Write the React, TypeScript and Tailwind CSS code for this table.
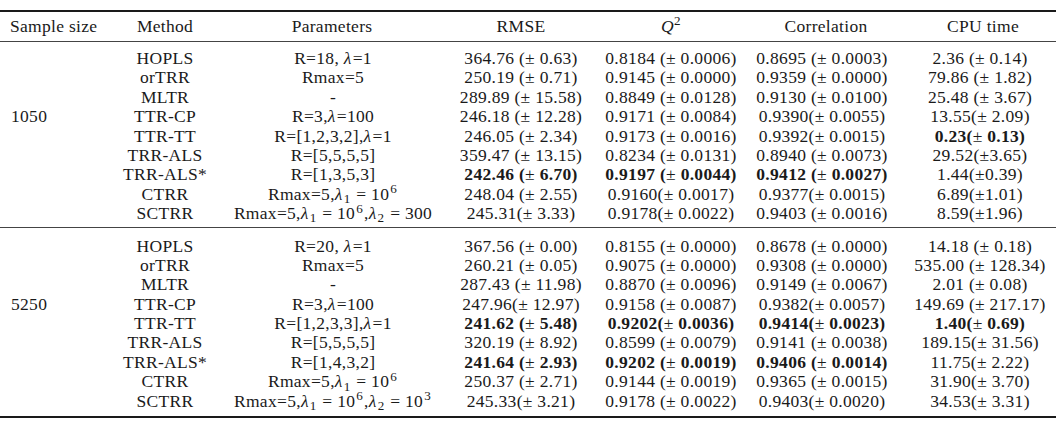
import React from "react";

type Cell = string | { b: true; t: string };

const B = (t: string): Cell => ({ b: true, t });

const Lam = ({ i }: { i?: string }) => (
  <>
    <i className="pr-[1px]">λ</i>
    {i ? <sub className="pr-[1px]">{i}</sub> : null}
  </>
);

const Sup = ({ t }: { t: string }) => <sup className="pl-[1px] pr-[1px]">{t}</sup>;

const Params: Record<string, React.ReactNode> = {
  hop18: (
    <>
      R=18, <Lam />=1
    </>
  ),
  hop20: (
    <>
      R=20, <Lam />=1
    </>
  ),
  rmax: <>Rmax=5</>,
  dash: <>-</>,
  cp: (
    <>
      R=3,<Lam />=100
    </>
  ),
  tt1: (
    <>
      R=[1,2,3,2],<Lam />=1
    </>
  ),
  tt2: (
    <>
      R=[1,2,3,3],<Lam />=1
    </>
  ),
  als: <>R=[5,5,5,5]</>,
  alsA: <>R=[1,3,5,3]</>,
  alsB: <>R=[1,4,3,2]</>,
  ctrr: (
    <>
      Rmax=5,<Lam i="1" /> = 10<Sup t="6" />
    </>
  ),
  sc1: (
    <>
      Rmax=5,<Lam i="1" /> = 10<Sup t="6" />,<Lam i="2" /> = 300
    </>
  ),
  sc2: (
    <>
      Rmax=5,<Lam i="1" /> = 10<Sup t="6" />,<Lam i="2" /> = 10<Sup t="3" />
    </>
  ),
};

type Row = [string, string, Cell, Cell, Cell, Cell];

const group1: Row[] = [
  ["HOPLS", "hop18", "364.76 (± 0.63)", "0.8184 (± 0.0006)", "0.8695 (± 0.0003)", "2.36 (± 0.14)"],
  ["orTRR", "rmax", "250.19 (± 0.71)", "0.9145 (± 0.0000)", "0.9359 (± 0.0000)", "79.86 (± 1.82)"],
  ["MLTR", "dash", "289.89 (± 15.58)", "0.8849 (± 0.0128)", "0.9130 (± 0.0100)", "25.48 (± 3.67)"],
  ["TTR-CP", "cp", "246.18 (± 12.28)", "0.9171 (± 0.0084)", "0.9390(± 0.0055)", "13.55(± 2.09)"],
  ["TTR-TT", "tt1", "246.05 (± 2.34)", "0.9173 (± 0.0016)", "0.9392(± 0.0015)", B("0.23(± 0.13)")],
  ["TRR-ALS", "als", "359.47 (± 13.15)", "0.8234 (± 0.0131)", "0.8940 (± 0.0073)", "29.52(±3.65)"],
  ["TRR-ALS*", "alsA", B("242.46 (± 6.70)"), B("0.9197 (± 0.0044)"), B("0.9412 (± 0.0027)"), "1.44(±0.39)"],
  ["CTRR", "ctrr", "248.04 (± 2.55)", "0.9160(± 0.0017)", "0.9377(± 0.0015)", "6.89(±1.01)"],
  ["SCTRR", "sc1", "245.31(± 3.33)", "0.9178(± 0.0022)", "0.9403 (± 0.0016)", "8.59(±1.96)"],
];

const group2: Row[] = [
  ["HOPLS", "hop20", "367.56 (± 0.00)", "0.8155 (± 0.0000)", "0.8678 (± 0.0000)", "14.18 (± 0.18)"],
  ["orTRR", "rmax", "260.21 (± 0.05)", "0.9075 (± 0.0000)", "0.9308 (± 0.0000)", "535.00 (± 128.34)"],
  ["MLTR", "dash", "287.43 (± 11.98)", "0.8870 (± 0.0096)", "0.9149 (± 0.0067)", "2.01 (± 0.08)"],
  ["TTR-CP", "cp", "247.96(± 12.97)", "0.9158 (± 0.0087)", "0.9382(± 0.0057)", "149.69 (± 217.17)"],
  ["TTR-TT", "tt2", B("241.62 (± 5.48)"), B("0.9202(± 0.0036)"), B("0.9414(± 0.0023)"), B("1.40(± 0.69)")],
  ["TRR-ALS", "als", "320.19 (± 8.92)", "0.8599 (± 0.0079)", "0.9141 (± 0.0038)", "189.15(± 31.56)"],
  ["TRR-ALS*", "alsB", B("241.64 (± 2.93)"), B("0.9202 (± 0.0019)"), B("0.9406 (± 0.0014)"), "11.75(± 2.22)"],
  ["CTRR", "ctrr", "250.37 (± 2.71)", "0.9144 (± 0.0019)", "0.9365 (± 0.0015)", "31.90(± 3.70)"],
  ["SCTRR", "sc2", "245.33(± 3.21)", "0.9178 (± 0.0022)", "0.9403(± 0.0020)", "34.53(± 3.31)"],
];

const renderCell = (c: Cell) => {
  if (typeof c === "string") return c;
  const parts = c.t.split("±");
  return (
    <span className="font-bold">
      {parts[0]}
      <span className="font-normal">±</span>
      {parts[1]}
    </span>
  );
};

const COLS = "grid grid-cols-[100px_110px_220px_162px_138px_172px_136px]";

function Group({ rows, size, pb }: { rows: Row[]; size: string; pb: string }) {
  return (
    <div className={`flex flex-col pt-[5px] ${pb}`}>
      {rows.map((r, i) => (
        <div
          key={i}
          className={`${COLS} h-[19.4px] items-center whitespace-nowrap translate-y-[1.5px]`}
        >
          <div className="text-left pl-[1px]">{i === 3 ? size : ""}</div>
          <div className="text-center">{r[0]}</div>
          <div className="text-center pl-[6px]">{Params[r[1]]}</div>
          <div className="text-center">{renderCell(r[2])}</div>
          <div className="text-center">{renderCell(r[3])}</div>
          <div className="text-center pr-[8px]">{renderCell(r[4])}</div>
          <div className="text-center">{renderCell(r[5])}</div>
        </div>
      ))}
    </div>
  );
}

export default function App() {
  return (
    <div
      className="w-[1058px] h-[433px] bg-white text-[#1a1a1a] text-[17.5px] tracking-[0.3px] leading-[19.4px] pt-[10px]"
      style={{ fontFamily: '"Liberation Serif", serif' }}
    >
      <div className="w-[1056px]">
        <div className="border-t-2 border-[#1a1a1a]" />
        <div className={`${COLS} pl-[10px] h-[29px] items-center whitespace-nowrap`}>
          <div className="text-left">Sample size</div>
          <div className="text-center">Method</div>
          <div className="text-center pl-[4px]">Parameters</div>
          <div className="text-center">RMSE</div>
          <div className="text-center">
            <i>Q</i>
            <sup>2</sup>
          </div>
          <div className="text-center">Correlation</div>
          <div className="text-center pl-[6px]">CPU time</div>
        </div>
        <div className="border-t border-[#444]" />
        <div className="pl-[10px]">
          <Group rows={group1} size="1050" pb="pb-[5px]" />
        </div>
        <div className="border-t-[1.5px] border-[#444]" />
        <div className="pl-[10px] pt-[2px]">
          <Group rows={group2} size="5250" pb="pb-[6.5px]" />
        </div>
        <div className="border-t-2 border-[#1a1a1a]" />
      </div>
    </div>
  );
}
